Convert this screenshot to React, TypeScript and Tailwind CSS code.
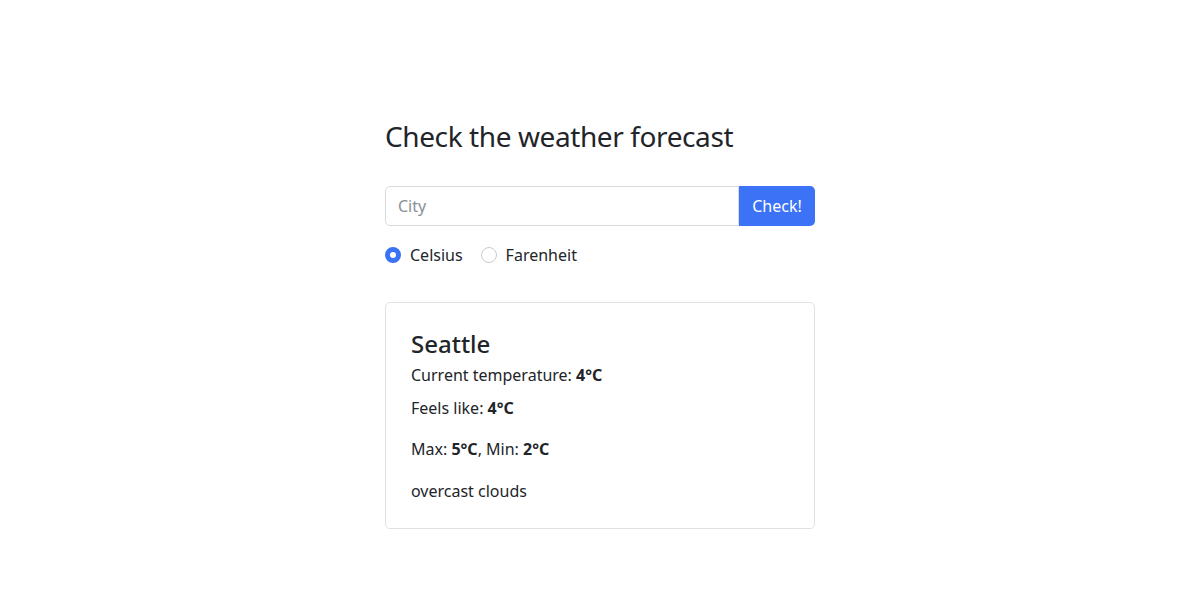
const App = () => {
  return (
    <div className="min-h-[600px] bg-white font-['Noto_Sans',sans-serif] text-[#212529]">
      <div className="mx-auto w-[430px] pt-[120px]">
        <h3 className="text-[28px] leading-[1.2] tracking-[-0.4px]">Check the weather forecast</h3>

        <div className="mt-[32px] flex h-[40px]">
          <input
            type="text"
            placeholder="City"
            className="flex-1 rounded-l-[5px] border border-[#d8dbde] px-[12px] text-[16px] outline-none placeholder:text-[#8a9096]"
          />
          <button className="w-[76px] rounded-r-[5px] bg-[#3c72f6] text-[16px] text-white">Check!</button>
        </div>

        <div className="mt-[17px] flex items-center text-[16px]">
          <label className="flex items-center">
            <span className="h-[16px] w-[16px] rounded-full border-[5px] border-[#3c72f6] bg-white" />
            <span className="ml-[9px]">Celsius</span>
          </label>
          <label className="ml-[18px] flex items-center">
            <span className="h-[16px] w-[16px] rounded-full border border-[#c8ccd0] bg-white" />
            <span className="ml-[9px]">Farenheit</span>
          </label>
        </div>

        <div className="mt-[35px] rounded-[5px] border border-[#dfe2e5] px-[25px] pb-[25px] pt-[27px]">
          <h4 className="text-[24px] font-medium leading-[1.2]">Seattle</h4>
          <p className="mt-[5px] text-[16px] leading-[24px]">
            Current temperature: <b>4°C</b>
          </p>
          <p className="mt-[9px] text-[16px] leading-[24px]">
            Feels like: <b>4°C</b>
          </p>
          <p className="mt-[17px] text-[16px] leading-[24px]">
            Max: <b>5°C</b>, Min: <b>2°C</b>
          </p>
          <p className="mt-[18px] text-[16px] leading-[24px]">overcast clouds</p>
        </div>
      </div>
    </div>
  );
};

export default App;
